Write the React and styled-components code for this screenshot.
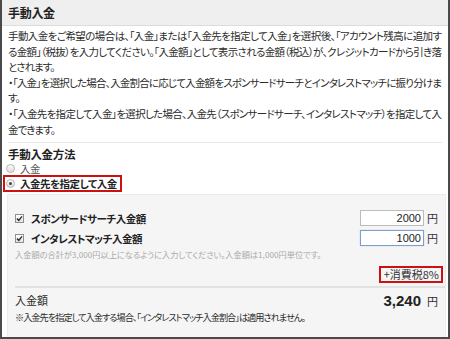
import React from "react";
import styled, { createGlobalStyle } from "styled-components";

const GlobalStyle = createGlobalStyle`
  html, body { margin: 0; padding: 0; background: #fff; }
  body {
    font-family: "Noto Sans CJK JP", "Liberation Sans", sans-serif;
    color: #2b2b2b;
    font-feature-settings: "palt" 1;
  }
  * { box-sizing: border-box; }
`;

const Frame = styled.div`
  width: 450px;
  height: 339px;
  border: 2px solid #4a4a4a;
  border-top: none;
  background: #fff;
  display: flex;
  flex-direction: column;
  overflow: hidden;
`;

const Header = styled.div`
  height: 26px;
  flex: none;
  background: #efefef;
  border-bottom: 1px solid #dcdcdc;
  padding-left: 6px;
  font-size: 12px;
  font-weight: 700;
  line-height: 25px;
  color: #222;
  letter-spacing: -0.3px;
`;

const Intro = styled.div`
  margin: 0 6px;
  padding: 2px 0 5px;
  border-bottom: 1px solid #e8e8e8;
  font-size: 10.5px;
  line-height: 15.6px;
  letter-spacing: -1px;
  flex: none;
`;

const Line = styled.div`
  width: 433px;
  text-align: left;
  text-align-last: ${(p) => (p.$full ? "justify" : "left")};
  text-justify: inter-character;
`;

const Method = styled.div`
  padding: 4px 6px 0;
  flex: none;
`;

const Title = styled.div`
  font-size: 11.5px;
  font-weight: 700;
  line-height: 14px;
  color: #222;
  letter-spacing: -0.3px;
`;

const RadioRow = styled.div`
  display: flex;
  align-items: center;
  gap: 5px;
  height: ${(p) => (p.$boxed ? "17px" : "14px")};
  margin-left: ${(p) => (p.$boxed ? "-5px" : "-2px")};
  font-size: 10.5px;
  letter-spacing: -0.5px;
  font-weight: ${(p) => (p.$boxed ? 700 : 400)};
  color: ${(p) => (p.$boxed ? "#222" : "#555")};
  width: fit-content;
  border: ${(p) => (p.$boxed ? "2px solid #cc1111" : "none")};
  padding: ${(p) => (p.$boxed ? "0 3px 0 1px" : "0")};
`;

const Radio = styled.span`
  width: 9px;
  height: 9px;
  border-radius: 50%;
  border: 1px solid #b4b4b4;
  background: linear-gradient(#fbfbfb, #dedede);
  display: flex;
  align-items: center;
  justify-content: center;
  flex: none;
  &::after {
    content: "";
    width: 3px;
    height: 3px;
    border-radius: 50%;
    background: ${(p) => (p.$checked ? "#444" : "transparent")};
  }
`;

const Panel = styled.div`
  flex: 1;
  margin: 2px 2px 0 5px;
  background: #f5f5f5;
  border: 1px solid #ebebeb;
  border-bottom: none;
  padding: 15px 7px 0;
  display: flex;
  flex-direction: column;
`;

const AmountRow = styled.div`
  display: flex;
  align-items: center;
  height: 16px;
  margin-top: ${(p) => (p.$first ? 0 : "4px")};
`;

const CheckLabel = styled.div`
  flex: 1;
  display: flex;
  align-items: center;
  gap: 7px;
  font-size: 10.5px;
  letter-spacing: -0.5px;
  font-weight: 700;
  color: #222;
`;

const CheckBox = styled.span`
  width: 9px;
  height: 9px;
  border: 1px solid #8f8f8f;
  background: linear-gradient(#ffffff, #e4e4e4);
  display: flex;
  align-items: center;
  justify-content: center;
  flex: none;
`;

const AmountInput = styled.input`
  width: 64px;
  height: 16px;
  border: 1px solid ${(p) => (p.$focus ? "#7c9fcf" : "#bcbcbc")};
  box-shadow: ${(p) => (p.$focus ? "0 0 1px #a9c4e8" : "none")};
  background: #fff;
  font-family: "Liberation Sans", sans-serif;
  font-size: 11px;
  color: #222;
  text-align: right;
  padding: 0 2px;
  outline: none;
`;

const Unit = styled.span`
  font-size: 11px;
  margin-left: 3px;
  color: #333;
`;

const Hint = styled.div`
  margin-top: 2px;
  font-size: 8.2px;
  line-height: 12px;
  color: #aaa;
  white-space: nowrap;
`;

const TaxRow = styled.div`
  display: flex;
  justify-content: flex-end;
  margin: 6px -5px 0 0;
`;

const TaxBox = styled.div`
  height: 17px;
  border: 2px solid #cc1111;
  padding: 0 2px 0 3px;
  font-size: 11px;
  line-height: 13px;
  color: #333;
`;

const Divider = styled.div`
  height: 2px;
  background: #e2e2e2;
  margin: 3px -7px 0 0;
`;

const TotalRow = styled.div`
  margin-top: 2px;
  height: 20px;
  display: flex;
  align-items: center;
  justify-content: space-between;
  font-size: 11px;
`;

const TotalValue = styled.div`
  display: flex;
  align-items: baseline;
  gap: 6px;
`;

const Big = styled.span`
  font-family: "Liberation Sans", sans-serif;
  font-size: 15px;
  font-weight: 700;
  color: #222;
`;

const Note = styled.div`
  font-size: 9.2px;
  letter-spacing: -1px;
  line-height: 14px;
  white-space: nowrap;
`;

const Check = () => (
  <svg width="7" height="7" viewBox="0 0 7 7">
    <path d="M1 3.6 L2.8 5.4 L6 1.4" fill="none" stroke="#333" strokeWidth="1.5" />
  </svg>
);

export default function App() {
  return (
    <>
      <GlobalStyle />
      <Frame>
        <Header>手動入金</Header>
        <Intro>
          <Line $full>手動入金をご希望の場合は、「入金」または「入金先を指定して入金」を選択後、「アカウント残高に追加す</Line>
          <Line $full>る金額」（税抜）を入力してください。「入金額」として表示される金額（税込）が、クレジットカードから引き落</Line>
          <Line>とされます。</Line>
          <Line $full>・「入金」を選択した場合、入金割合に応じて入金額をスポンサードサーチとインタレストマッチに振り分けま</Line>
          <Line>す。</Line>
          <Line $full>・「入金先を指定して入金」を選択した場合、入金先（スポンサードサーチ、インタレストマッチ）を指定して入</Line>
          <Line>金できます。</Line>
        </Intro>
        <Method>
          <Title>手動入金方法</Title>
          <RadioRow>
            <Radio />
            入金
          </RadioRow>
          <RadioRow $boxed>
            <Radio $checked />
            入金先を指定して入金
          </RadioRow>
        </Method>
        <Panel>
          <AmountRow $first>
            <CheckLabel>
              <CheckBox>
                <Check />
              </CheckBox>
              スポンサードサーチ入金額
            </CheckLabel>
            <AmountInput defaultValue="2000" />
            <Unit>円</Unit>
          </AmountRow>
          <AmountRow>
            <CheckLabel>
              <CheckBox>
                <Check />
              </CheckBox>
              インタレストマッチ入金額
            </CheckLabel>
            <AmountInput $focus defaultValue="1000" />
            <Unit>円</Unit>
          </AmountRow>
          <Hint>入金額の合計が3,000円以上になるように入力してください。入金額は1,000円単位です。</Hint>
          <TaxRow>
            <TaxBox>+消費税8%</TaxBox>
          </TaxRow>
          <Divider />
          <TotalRow>
            <span>入金額</span>
            <TotalValue>
              <Big>3,240</Big>
              <span>円</span>
            </TotalValue>
          </TotalRow>
          <Note>※入金先を指定して入金する場合、「インタレストマッチ入金割合」は適用されません。</Note>
        </Panel>
      </Frame>
    </>
  );
}
